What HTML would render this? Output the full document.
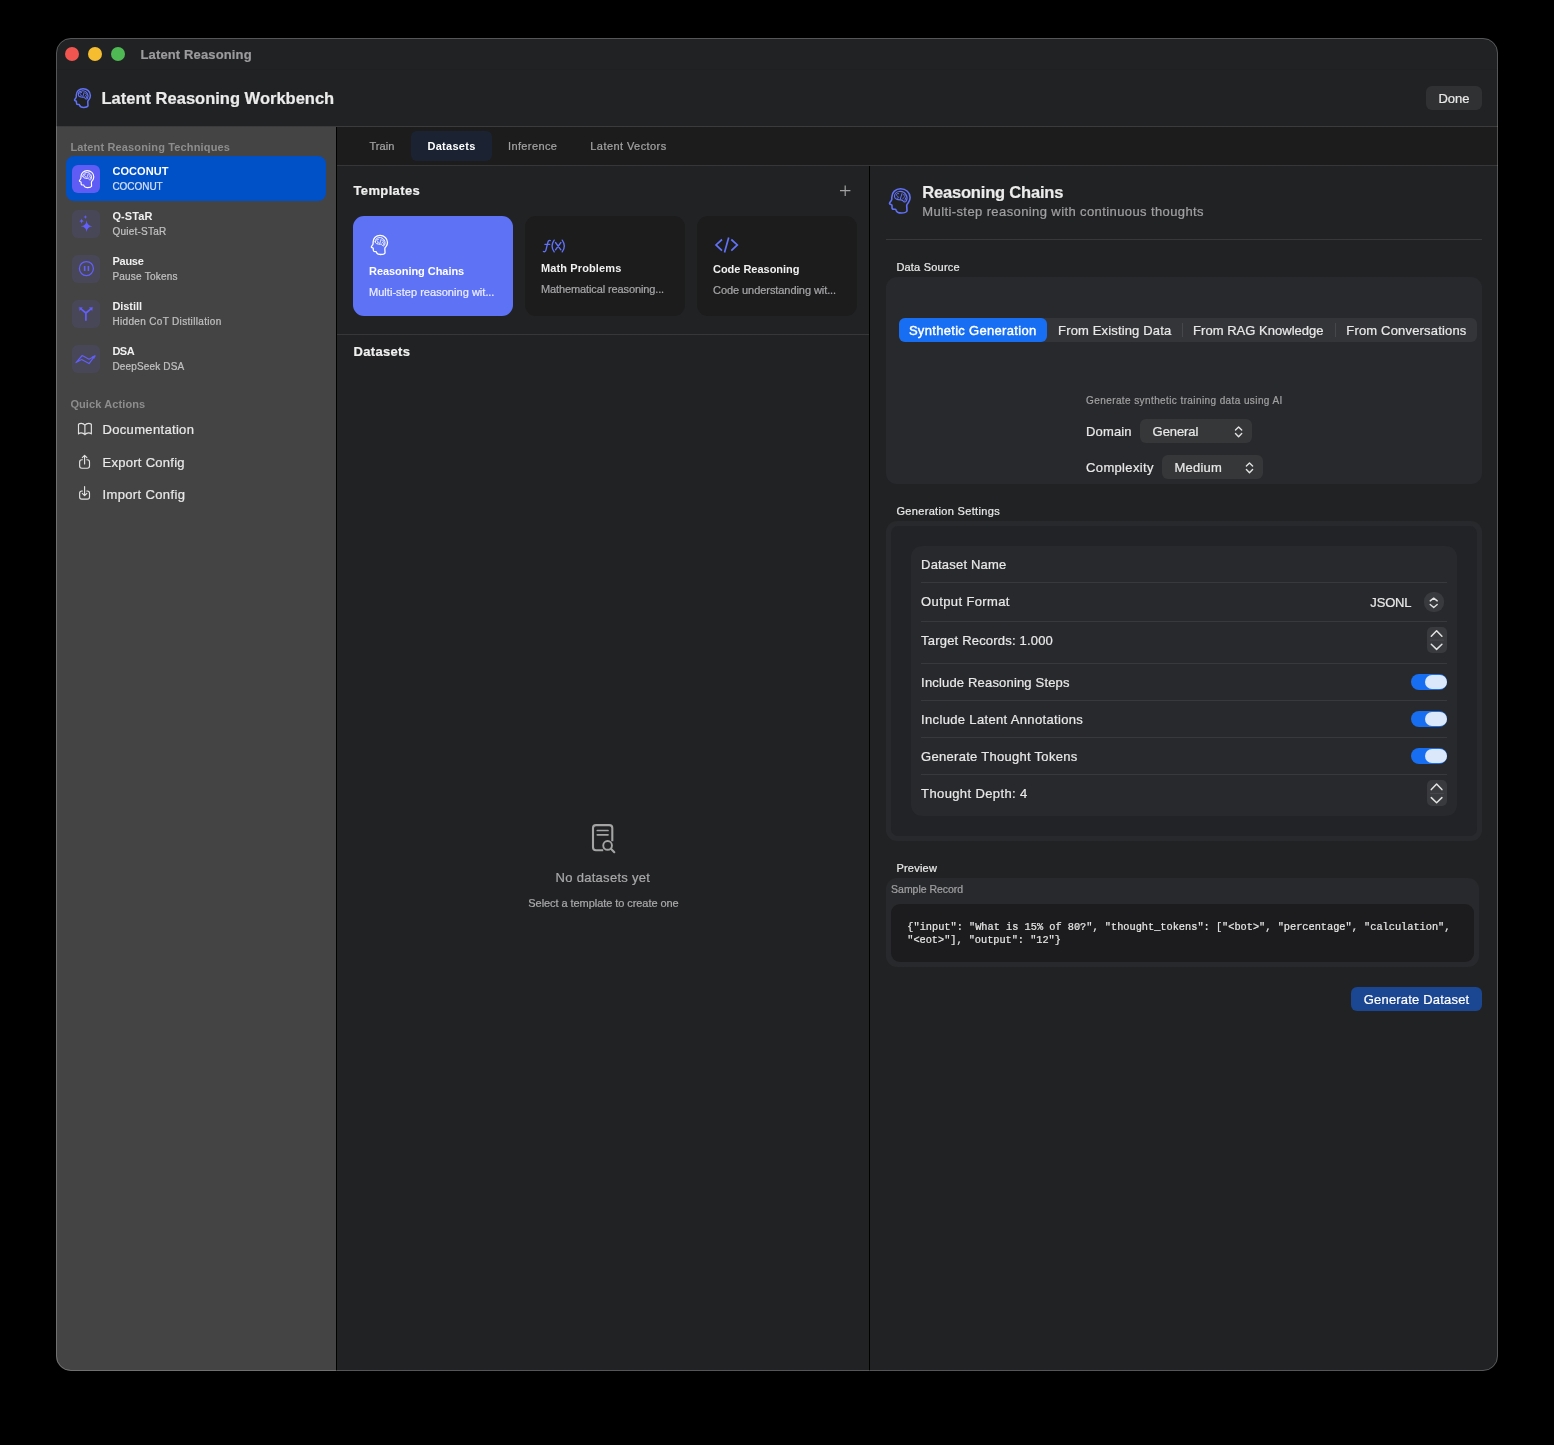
<!DOCTYPE html>
<html><head><meta charset="utf-8">
<style>
*{box-sizing:border-box;margin:0;padding:0}
html,body{width:1554px;height:1445px;background:#000;overflow:hidden}
body{font-family:"Liberation Sans",sans-serif;color:#e6e6e6;position:relative}
.a{position:absolute}
#win{position:absolute;left:56px;top:38px;width:1442px;height:1333px;border-radius:15px;background:#212224;overflow:hidden}
#p{position:absolute;left:-56px;top:-38px;width:1554px;height:1445px;will-change:transform}
#wb{position:absolute;left:56px;top:38px;width:1442px;height:1333px;border-radius:15px;border:1px solid rgba(255,255,255,.24)}
.t{position:absolute;white-space:nowrap;line-height:1;-webkit-text-stroke:0.22px}
svg{position:absolute;overflow:visible}
</style></head><body>
<div id="win"><div id="p">
<div class="a" style="left:65px;top:47px;width:14px;height:14px;background:#f0554f;border-radius:7px;"></div>
<div class="a" style="left:88px;top:47px;width:14px;height:14px;background:#f5bd2f;border-radius:7px;"></div>
<div class="a" style="left:111px;top:47px;width:14px;height:14px;background:#4fb954;border-radius:7px;"></div>
<div class="t" style="left:140.5px;top:48.03px;font-size:13px;color:#9c9c9e;font-weight:bold;-webkit-text-stroke:0.2px;letter-spacing:0.135px;">Latent Reasoning</div>
<div class="t" style="left:101.5px;top:90.12px;font-size:16.5px;color:#ebebeb;font-weight:bold;-webkit-text-stroke:0.2px;letter-spacing:0.005px;">Latent Reasoning Workbench</div>
<div class="a" style="left:1426px;top:86px;width:56px;height:24px;background:#303133;border-radius:6px;"></div>
<div class="t" style="left:1438.4px;top:92.13px;font-size:13px;color:#e8e8e8;letter-spacing:0.007px;">Done</div>
<div class="a" style="left:56px;top:69px;width:1442px;height:1px;background:#1f2022;"></div>
<div class="a" style="left:56px;top:126px;width:1442px;height:1px;background:#3b3b3d;"></div>
<div class="a" style="left:56px;top:127px;width:280px;height:1245px;background:#444444;"></div>
<div class="a" style="left:336px;top:127px;width:1px;height:1245px;background:#000;"></div>
<div class="t" style="left:70.4px;top:141.81px;font-size:11px;color:#8d8d8d;font-weight:bold;-webkit-text-stroke:0;letter-spacing:0.148px;">Latent Reasoning Techniques</div>
<div class="a" style="left:66px;top:156px;width:260px;height:45px;background:#0050c7;border-radius:8px;"></div>
<div class="a" style="left:72px;top:165px;width:28px;height:28px;background:#5f5cf6;border-radius:6px;"></div>
<div class="t" style="left:112.4px;top:165.81px;font-size:11px;color:#ffffff;font-weight:bold;-webkit-text-stroke:0;letter-spacing:0.082px;">COCONUT</div>
<div class="t" style="left:112.4px;top:181.90px;font-size:10px;color:#d6e0f6;letter-spacing:-0.044px;">COCONUT</div>
<div class="a" style="left:72px;top:210px;width:28px;height:28px;background:#484758;border-radius:6px;"></div>
<div class="t" style="left:112.4px;top:210.81px;font-size:11px;color:#f0f0f0;font-weight:bold;-webkit-text-stroke:0;letter-spacing:0.114px;">Q-STaR</div>
<div class="t" style="left:112.4px;top:226.90px;font-size:10px;color:#c0c0c0;letter-spacing:0.246px;">Quiet-STaR</div>
<div class="a" style="left:72px;top:255px;width:28px;height:28px;background:#484758;border-radius:6px;"></div>
<div class="t" style="left:112.4px;top:255.81px;font-size:11px;color:#f0f0f0;font-weight:bold;-webkit-text-stroke:0;letter-spacing:-0.230px;">Pause</div>
<div class="t" style="left:112.4px;top:271.90px;font-size:10px;color:#c0c0c0;letter-spacing:0.224px;">Pause Tokens</div>
<div class="a" style="left:72px;top:300px;width:28px;height:28px;background:#484758;border-radius:6px;"></div>
<div class="t" style="left:112.4px;top:300.81px;font-size:11px;color:#f0f0f0;font-weight:bold;-webkit-text-stroke:0;letter-spacing:-0.059px;">Distill</div>
<div class="t" style="left:112.4px;top:316.90px;font-size:10px;color:#c0c0c0;letter-spacing:0.335px;">Hidden CoT Distillation</div>
<div class="a" style="left:72px;top:345px;width:28px;height:28px;background:#484758;border-radius:6px;"></div>
<div class="t" style="left:112.4px;top:345.81px;font-size:11px;color:#f0f0f0;font-weight:bold;-webkit-text-stroke:0;letter-spacing:-0.517px;">DSA</div>
<div class="t" style="left:112.4px;top:361.90px;font-size:10px;color:#c0c0c0;letter-spacing:0.159px;">DeepSeek DSA</div>
<div class="t" style="left:70.4px;top:398.91px;font-size:11px;color:#8d8d8d;font-weight:bold;-webkit-text-stroke:0;letter-spacing:0.103px;">Quick Actions</div>
<div class="t" style="left:102.5px;top:423.03px;font-size:13px;color:#e8e8e8;letter-spacing:0.329px;">Documentation</div>
<div class="t" style="left:102.5px;top:456.13px;font-size:13px;color:#e8e8e8;letter-spacing:0.278px;">Export Config</div>
<div class="t" style="left:102.5px;top:487.83px;font-size:13px;color:#e8e8e8;letter-spacing:0.363px;">Import Config</div>
<div class="a" style="left:337px;top:127px;width:1161px;height:38px;background:#1c1c1c;"></div>
<div class="a" style="left:337px;top:165px;width:1161px;height:1px;background:#363638;"></div>
<div class="a" style="left:411px;top:131px;width:81px;height:30px;background:#1b2333;border-radius:6px;"></div>
<div class="t" style="left:369.5px;top:140.91px;font-size:11px;color:#a3a3a3;letter-spacing:0.061px;">Train</div>
<div class="t" style="left:427.4px;top:140.91px;font-size:11px;color:#ffffff;font-weight:bold;-webkit-text-stroke:0;letter-spacing:0.292px;">Datasets</div>
<div class="t" style="left:508px;top:140.91px;font-size:11px;color:#a3a3a3;letter-spacing:0.378px;">Inference</div>
<div class="t" style="left:590.3px;top:140.91px;font-size:11px;color:#a3a3a3;letter-spacing:0.429px;">Latent Vectors</div>
<div class="a" style="left:869px;top:166px;width:1px;height:1206px;background:#000;"></div>
<div class="t" style="left:353.5px;top:184.23px;font-size:13px;color:#f0f0f0;font-weight:bold;-webkit-text-stroke:0.2px;letter-spacing:0.357px;">Templates</div>
<div class="a" style="left:353px;top:216px;width:160px;height:100px;background:#5e72f6;border-radius:11px;"></div>
<div class="a" style="left:525px;top:216px;width:160px;height:100px;background:#1c1c1d;border-radius:11px;"></div>
<div class="a" style="left:697px;top:216px;width:160px;height:100px;background:#1c1c1d;border-radius:11px;"></div>
<div class="t" style="left:369px;top:265.81px;font-size:11px;color:#ffffff;font-weight:bold;-webkit-text-stroke:0;letter-spacing:-0.051px;">Reasoning Chains</div>
<div class="t" style="left:369px;top:287.21px;font-size:11px;color:#eceeff;letter-spacing:0.037px;">Multi-step reasoning wit<span style="letter-spacing:-0.2px">...</span></div>
<div class="t" style="left:541px;top:262.71px;font-size:11px;color:#f0f0f0;font-weight:bold;-webkit-text-stroke:0;letter-spacing:0.120px;">Math Problems</div>
<div class="t" style="left:541px;top:284.41px;font-size:11px;color:#a6a6a8;letter-spacing:-0.111px;">Mathematical reasoning<span style="letter-spacing:-0.2px">...</span></div>
<div class="t" style="left:713px;top:263.81px;font-size:11px;color:#f0f0f0;font-weight:bold;-webkit-text-stroke:0;letter-spacing:-0.023px;">Code Reasoning</div>
<div class="t" style="left:713px;top:284.81px;font-size:11px;color:#a6a6a8;letter-spacing:-0.061px;">Code understanding wit<span style="letter-spacing:-0.2px">...</span></div>
<div class="a" style="left:337px;top:334px;width:532px;height:1px;background:#37373a;"></div>
<div class="t" style="left:353.5px;top:345.13px;font-size:13px;color:#f0f0f0;font-weight:bold;-webkit-text-stroke:0.2px;letter-spacing:0.328px;">Datasets</div>
<div class="t" style="left:555.6px;top:871.33px;font-size:13px;color:#a9a9aa;letter-spacing:0.284px;">No datasets yet</div>
<div class="t" style="left:528.3px;top:898.01px;font-size:11px;color:#a9a9aa;letter-spacing:-0.062px;">Select a template to create one</div>
<div class="t" style="left:922.3px;top:184.31px;font-size:16.5px;color:#ebebeb;font-weight:bold;-webkit-text-stroke:0.2px;letter-spacing:-0.190px;">Reasoning Chains</div>
<div class="t" style="left:922.3px;top:205.13px;font-size:13px;color:#a0a0a2;letter-spacing:0.399px;">Multi-step reasoning with continuous thoughts</div>
<div class="a" style="left:886px;top:239px;width:596px;height:1px;background:#38383b;"></div>
<div class="t" style="left:896.4px;top:261.61px;font-size:11px;color:#e8e8e8;letter-spacing:0.204px;">Data Source</div>
<div class="a" style="left:886px;top:277px;width:596px;height:207px;background:#28292c;border-radius:11px;"></div>
<div class="a" style="left:899px;top:318px;width:578px;height:24px;background:#343538;border-radius:6px;"></div>
<div class="a" style="left:899px;top:318px;width:148px;height:24px;background:#186ef3;border-radius:6px;"></div>
<div class="t" style="left:908.9px;top:323.93px;font-size:13px;color:#ffffff;letter-spacing:0.310px;-webkit-text-stroke:0.4px;">Synthetic Generation</div>
<div class="t" style="left:1058.1px;top:323.93px;font-size:13px;color:#e8e8e8;letter-spacing:0.150px;">From Existing Data</div>
<div class="a" style="left:1182px;top:323px;width:1px;height:14px;background:#46474a;"></div>
<div class="t" style="left:1193.1px;top:323.93px;font-size:13px;color:#e8e8e8;letter-spacing:0.026px;">From RAG Knowledge</div>
<div class="a" style="left:1335px;top:323px;width:1px;height:14px;background:#46474a;"></div>
<div class="t" style="left:1346.3px;top:323.93px;font-size:13px;color:#e8e8e8;letter-spacing:0.174px;">From Conversations</div>
<div class="t" style="left:1086.1px;top:395.50px;font-size:10px;color:#a0a0a2;letter-spacing:0.402px;">Generate synthetic training data using AI</div>
<div class="t" style="left:1086.1px;top:424.83px;font-size:13px;color:#e8e8e8;letter-spacing:0.121px;">Domain</div>
<div class="a" style="left:1140px;top:419px;width:112px;height:24px;background:#363739;border-radius:6px;"></div>
<div class="t" style="left:1152.6px;top:424.83px;font-size:13px;color:#e8e8e8;letter-spacing:-0.075px;">General</div>
<div class="t" style="left:1086.1px;top:460.93px;font-size:13px;color:#e8e8e8;letter-spacing:0.334px;">Complexity</div>
<div class="a" style="left:1162px;top:455px;width:101px;height:24px;background:#363739;border-radius:6px;"></div>
<div class="t" style="left:1174.5px;top:460.93px;font-size:13px;color:#e8e8e8;letter-spacing:0.230px;">Medium</div>
<div class="t" style="left:896.4px;top:505.71px;font-size:11px;color:#e8e8e8;letter-spacing:0.337px;">Generation Settings</div>
<div class="a" style="left:886px;top:521px;width:596px;height:320px;background:#28292c;border-radius:11px;"></div>
<div class="a" style="left:891px;top:526px;width:586px;height:310px;background:#222326;border-radius:7px;"></div>
<div class="a" style="left:911px;top:546px;width:546px;height:270px;background:#28292c;border-radius:11px;"></div>
<div class="t" style="left:921.1px;top:558.23px;font-size:13px;color:#e8e8e8;letter-spacing:0.182px;">Dataset Name</div>
<div class="t" style="left:921.1px;top:595.13px;font-size:13px;color:#e8e8e8;letter-spacing:0.382px;">Output Format</div>
<div class="t" style="left:921.1px;top:634.03px;font-size:13px;color:#e8e8e8;letter-spacing:0.190px;">Target Records: 1.000</div>
<div class="t" style="left:921.1px;top:675.83px;font-size:13px;color:#e8e8e8;letter-spacing:0.175px;">Include Reasoning Steps</div>
<div class="t" style="left:921.1px;top:713.13px;font-size:13px;color:#e8e8e8;letter-spacing:0.339px;">Include Latent Annotations</div>
<div class="t" style="left:921.1px;top:749.93px;font-size:13px;color:#e8e8e8;letter-spacing:0.284px;">Generate Thought Tokens</div>
<div class="t" style="left:921.1px;top:786.83px;font-size:13px;color:#e8e8e8;letter-spacing:0.382px;">Thought Depth: 4</div>
<div class="a" style="left:921px;top:582px;width:526px;height:1px;background:#38393c;"></div>
<div class="a" style="left:921px;top:621px;width:526px;height:1px;background:#38393c;"></div>
<div class="a" style="left:921px;top:663px;width:526px;height:1px;background:#38393c;"></div>
<div class="a" style="left:921px;top:700px;width:526px;height:1px;background:#38393c;"></div>
<div class="a" style="left:921px;top:737px;width:526px;height:1px;background:#38393c;"></div>
<div class="a" style="left:921px;top:774px;width:526px;height:1px;background:#38393c;"></div>
<div class="t" style="left:1370.3px;top:595.93px;font-size:13px;color:#e8e8e8;letter-spacing:-0.152px;">JSONL</div>
<div class="a" style="left:1424px;top:592px;width:20px;height:20px;background:#393a3d;border-radius:9px;"></div>
<div class="a" style="left:1427.2px;top:627.4px;width:19.6px;height:25.6px;background:#393a3d;border-radius:5px;"></div>
<div class="a" style="left:1427.2px;top:780.2px;width:19.6px;height:25.6px;background:#393a3d;border-radius:5px;"></div>
<div class="a" style="left:1411px;top:674px;width:36px;height:16px;background:#186ef0;border-radius:8px;"></div>
<div class="a" style="left:1424.8px;top:674.8px;width:21.8px;height:14.4px;background:#dbe8fc;border-radius:7.2px;"></div>
<div class="a" style="left:1411px;top:711.3px;width:36px;height:16px;background:#186ef0;border-radius:8px;"></div>
<div class="a" style="left:1424.8px;top:712.1px;width:21.8px;height:14.4px;background:#dbe8fc;border-radius:7.2px;"></div>
<div class="a" style="left:1411px;top:748.1px;width:36px;height:16px;background:#186ef0;border-radius:8px;"></div>
<div class="a" style="left:1424.8px;top:748.9px;width:21.8px;height:14.4px;background:#dbe8fc;border-radius:7.2px;"></div>
<div class="t" style="left:896.4px;top:862.61px;font-size:11px;color:#e8e8e8;letter-spacing:0.229px;">Preview</div>
<div class="a" style="left:886px;top:878px;width:593px;height:89px;background:#28292c;border-radius:11px;"></div>
<div class="t" style="left:891.1px;top:884.36px;font-size:10.5px;color:#a0a0a2;letter-spacing:-0.023px;">Sample Record</div>
<div class="a" style="left:891px;top:904px;width:583px;height:57.5px;background:#1c1c1e;border-radius:9px;"></div>
<div class="t" style="left:907.3px;top:922.45px;font-size:10.3px;color:#e6e6e6;font-family:'Liberation Mono',monospace;letter-spacing:-0.007px;">{&quot;input&quot;: &quot;What is 15% of 80?&quot;, &quot;thought_tokens&quot;: [&quot;&lt;bot&gt;&quot;, &quot;percentage&quot;, &quot;calculation&quot;,</div>
<div class="t" style="left:907.3px;top:935.45px;font-size:10.3px;color:#e6e6e6;font-family:'Liberation Mono',monospace;letter-spacing:-0.037px;">&quot;&lt;eot&gt;&quot;], &quot;output&quot;: &quot;12&quot;}</div>
<div class="a" style="left:1351px;top:987px;width:131px;height:24px;background:#1b4691;border-radius:6px;"></div>
<div class="t" style="left:1363.8px;top:992.93px;font-size:13px;color:#ffffff;letter-spacing:0.185px;">Generate Dataset</div>
<svg width="1554" height="1445" viewBox="0 0 1554 1445" style="left:0;top:0" fill="none" stroke-linecap="round" stroke-linejoin="round">
<g transform="translate(880,180) scale(1)" stroke="#6172f6"><path d="M27,31 L26.7,25.6 C26.7,24.3 27.6,23.6 28.4,22.6 C29.6,21 30.1,19.3 30.1,17.6 C30.1,12.4 25.9,8.75 20.6,8.75 C15.6,8.75 11.8,12.3 11.8,17.2 L11.8,19.1 C11.8,19.8 11.5,20.2 11.1,20.8 L9.7,22.8 C9.3,23.5 9.6,24.1 10.3,24.3 L11.5,24.7 C11.9,24.8 12,25.1 12,25.5 L12,27.4 C12,28.6 12.8,29.3 13.9,29.3 L15.3,29.3 C15.8,29.3 16,29.6 16.1,30.2 C16.7,32.3 18.9,33 21.4,33 C24,33 26.2,32.6 27,31 Z" stroke-width="1.600"/><path d="M14.5,16.8 C14.3,14.2 16.2,11.9 19,11.5 C22,11 24.6,12.2 26,14.6 C27.2,16.6 27.3,19.2 26.3,21 C25.7,22.1 24.6,22.4 23.7,21.5 C23,20.6 22.2,20 21,19.9 C19.5,19.8 18,19.9 16.6,19.3 C15.3,18.8 14.6,18 14.5,16.8 Z" stroke-width="1.152"/><path d="M18.7,13.6 C17.2,13.2 16.1,14.2 16.5,15.3 C16.9,16.3 18.4,16.2 18.6,17.3 C18.7,18 18,18.4 17.2,18.2 M22,13.5 L20.2,19.3 M23.2,14.8 C24.3,14.3 25.3,15 25,16.1 C24.7,17 23.4,17.4 23,18.5 M25.8,17.7 L24.9,20.3" stroke-width="0.992" stroke-opacity="1"/></g>
<g transform="translate(67.2,82) scale(0.77)" stroke="#6172f6"><path d="M27,31 L26.7,25.6 C26.7,24.3 27.6,23.6 28.4,22.6 C29.6,21 30.1,19.3 30.1,17.6 C30.1,12.4 25.9,8.75 20.6,8.75 C15.6,8.75 11.8,12.3 11.8,17.2 L11.8,19.1 C11.8,19.8 11.5,20.2 11.1,20.8 L9.7,22.8 C9.3,23.5 9.6,24.1 10.3,24.3 L11.5,24.7 C11.9,24.8 12,25.1 12,25.5 L12,27.4 C12,28.6 12.8,29.3 13.9,29.3 L15.3,29.3 C15.8,29.3 16,29.6 16.1,30.2 C16.7,32.3 18.9,33 21.4,33 C24,33 26.2,32.6 27,31 Z" stroke-width="1.948"/><path d="M14.5,16.8 C14.3,14.2 16.2,11.9 19,11.5 C22,11 24.6,12.2 26,14.6 C27.2,16.6 27.3,19.2 26.3,21 C25.7,22.1 24.6,22.4 23.7,21.5 C23,20.6 22.2,20 21,19.9 C19.5,19.8 18,19.9 16.6,19.3 C15.3,18.8 14.6,18 14.5,16.8 Z" stroke-width="1.403"/><path d="M18.7,13.6 C17.2,13.2 16.1,14.2 16.5,15.3 C16.9,16.3 18.4,16.2 18.6,17.3 C18.7,18 18,18.4 17.2,18.2 M22,13.5 L20.2,19.3 M23.2,14.8 C24.3,14.3 25.3,15 25,16.1 C24.7,17 23.4,17.4 23,18.5 M25.8,17.7 L24.9,20.3" stroke-width="1.208" stroke-opacity="1"/></g>
<g transform="translate(72.7,164.5) scale(0.7)" stroke="#ffffff"><path d="M27,31 L26.7,25.6 C26.7,24.3 27.6,23.6 28.4,22.6 C29.6,21 30.1,19.3 30.1,17.6 C30.1,12.4 25.9,8.75 20.6,8.75 C15.6,8.75 11.8,12.3 11.8,17.2 L11.8,19.1 C11.8,19.8 11.5,20.2 11.1,20.8 L9.7,22.8 C9.3,23.5 9.6,24.1 10.3,24.3 L11.5,24.7 C11.9,24.8 12,25.1 12,25.5 L12,27.4 C12,28.6 12.8,29.3 13.9,29.3 L15.3,29.3 C15.8,29.3 16,29.6 16.1,30.2 C16.7,32.3 18.9,33 21.4,33 C24,33 26.2,32.6 27,31 Z" stroke-width="1.643"/><path d="M14.5,16.8 C14.3,14.2 16.2,11.9 19,11.5 C22,11 24.6,12.2 26,14.6 C27.2,16.6 27.3,19.2 26.3,21 C25.7,22.1 24.6,22.4 23.7,21.5 C23,20.6 22.2,20 21,19.9 C19.5,19.8 18,19.9 16.6,19.3 C15.3,18.8 14.6,18 14.5,16.8 Z" stroke-width="1.183"/><path d="M18.7,13.6 C17.2,13.2 16.1,14.2 16.5,15.3 C16.9,16.3 18.4,16.2 18.6,17.3 C18.7,18 18,18.4 17.2,18.2 M22,13.5 L20.2,19.3 M23.2,14.8 C24.3,14.3 25.3,15 25,16.1 C24.7,17 23.4,17.4 23,18.5 M25.8,17.7 L24.9,20.3" stroke-width="1.019" stroke-opacity="1"/></g>
<g transform="translate(363.85,228.6) scale(0.785)" stroke="#ffffff"><path d="M27,31 L26.7,25.6 C26.7,24.3 27.6,23.6 28.4,22.6 C29.6,21 30.1,19.3 30.1,17.6 C30.1,12.4 25.9,8.75 20.6,8.75 C15.6,8.75 11.8,12.3 11.8,17.2 L11.8,19.1 C11.8,19.8 11.5,20.2 11.1,20.8 L9.7,22.8 C9.3,23.5 9.6,24.1 10.3,24.3 L11.5,24.7 C11.9,24.8 12,25.1 12,25.5 L12,27.4 C12,28.6 12.8,29.3 13.9,29.3 L15.3,29.3 C15.8,29.3 16,29.6 16.1,30.2 C16.7,32.3 18.9,33 21.4,33 C24,33 26.2,32.6 27,31 Z" stroke-width="1.656"/><path d="M14.5,16.8 C14.3,14.2 16.2,11.9 19,11.5 C22,11 24.6,12.2 26,14.6 C27.2,16.6 27.3,19.2 26.3,21 C25.7,22.1 24.6,22.4 23.7,21.5 C23,20.6 22.2,20 21,19.9 C19.5,19.8 18,19.9 16.6,19.3 C15.3,18.8 14.6,18 14.5,16.8 Z" stroke-width="1.192"/><path d="M18.7,13.6 C17.2,13.2 16.1,14.2 16.5,15.3 C16.9,16.3 18.4,16.2 18.6,17.3 C18.7,18 18,18.4 17.2,18.2 M22,13.5 L20.2,19.3 M23.2,14.8 C24.3,14.3 25.3,15 25,16.1 C24.7,17 23.4,17.4 23,18.5 M25.8,17.7 L24.9,20.3" stroke-width="1.027" stroke-opacity="1"/></g>
<path d="M86.6,220.3 Q86.954,225.846 92.5,226.2 Q86.954,226.554 86.6,232.1 Q86.246,226.554 80.7,226.2 Q86.246,225.846 86.6,220.3 Z M81.6,218.2 Q81.774,220.926 84.5,221.1 Q81.774,221.274 81.6,224 Q81.426,221.274 78.7,221.1 Q81.426,220.926 81.6,218.2 Z M85.4,215.1 Q85.52,216.98 87.4,217.1 Q85.52,217.22 85.4,219.1 Q85.28,217.22 83.4,217.1 Q85.28,216.98 85.4,215.1 Z" fill="#625ffa"/>
<circle cx="86.4" cy="268.5" r="7" stroke="#625ffa" stroke-width="1.25"/>
<path d="M84.65,265.9 V271.1 M88.4,265.9 V271.1" stroke="#625ffa" stroke-width="1.6" stroke-linecap="butt"/>
<path d="M85.9,320.7 V313 L80.6,308.6 M85.9,313 L91.3,308.6" stroke="#625ffa" stroke-width="1.7" stroke-linecap="butt"/>
<path d="M79.5,307.4 L82.4,307.8 L79.9,310.3 Z M92.3,307.4 L89.4,307.8 L91.9,310.3 Z" fill="#625ffa" stroke="#625ffa" stroke-width="0.5"/>
<path d="M76,362.6 L82.2,355.5 L89.05,359.2 L94.9,355.9 L89.05,363.6 L81.6,359.5 Z" stroke="#625ffa" stroke-width="1.15"/>
<path d="M94.9,355.9 L92.4,356.6 L93.8,358.2 Z" fill="#625ffa" stroke="#625ffa" stroke-width="0.6"/>
<path d="M84.9,425.2 C84,424 82.6,423.3 81.2,423.3 C80.2,423.3 79.2,423.7 78.5,424.3 V433.9 C79.2,433.3 80.2,432.9 81.2,432.9 C82.6,432.9 84,433.6 84.9,434.7 C85.8,433.6 87.2,432.9 88.6,432.9 C89.6,432.9 90.6,433.3 91.35,433.9 V424.3 C90.6,423.7 89.6,423.3 88.6,423.3 C87.2,423.3 85.8,424 84.9,425.2 Z M84.9,425.2 V434.7" stroke="#e2e2e2" stroke-width="1.15"/>
<path d="M82.4,459.75 H81.85 A2.2,2.2 0 0 0 79.65,461.95 V466.05 A2.2,2.2 0 0 0 81.85,468.25 H87.3 A2.2,2.2 0 0 0 89.5,466.05 V461.95 A2.2,2.2 0 0 0 87.3,459.75 H86.8 M84.6,463.9 V455.4 M82.3,457.6 L84.6,455.3 L86.9,457.6" stroke="#e2e2e2" stroke-width="1.15"/>
<path d="M82.4,490.95 H81.85 A2.2,2.2 0 0 0 79.65,493.15 V496.95 A2.2,2.2 0 0 0 81.85,499.15 H87.3 A2.2,2.2 0 0 0 89.5,496.95 V493.15 A2.2,2.2 0 0 0 87.3,490.95 H86.8 M84.6,486.6 V495.4 M82.3,493.3 L84.6,495.6 L86.9,493.3" stroke="#e2e2e2" stroke-width="1.15"/>
<path d="M840,190.7 H850.4 M845.2,185.5 V195.9" stroke="#a2a2a2" stroke-width="1.2" stroke-linecap="butt"/>
<path d="M550.3,240.6 C549.3,240.2 548.5,240.5 548.1,241.6 C547.5,243.4 546.5,248 546,249.9 C545.6,251.5 544.6,252.1 543.4,251.5 M544.9,244.3 H549.8 M554.2,240.1 C551.6,243.7 551.6,248.3 554.2,251.9 M555.5,242.5 L560.9,249.8 M560.9,242.5 L555.5,249.8 M562.2,240.1 C564.8,243.7 564.8,248.3 562.2,251.9" stroke="#6172f6" stroke-width="1.35"/>
<path d="M722,239.5 L716,244.9 L722,250.6 M728.7,237.5 L724.5,252.5 M731.3,239.5 L737.3,244.9 L731.3,250.6" stroke="#6172f6" stroke-width="1.7" stroke-linecap="butt" stroke-linejoin="miter"/>
<path d="M603.2,850.2 H596 C594,850.2 593,849.2 593,847.2 V828.1 C593,826.1 594,825.1 596,825.1 H609.3 C611.3,825.1 612.3,826.1 612.3,828.1 V841.3" stroke="#a4a4a4" stroke-width="2.1" stroke-linecap="butt"/>
<path d="M597.3,830.5 H608 M597.3,834.8 H608" stroke="#a4a4a4" stroke-width="1.7"/>
<circle cx="607.6" cy="845.4" r="4.35" stroke="#a4a4a4" stroke-width="1.9"/>
<path d="M610.9,848.8 L614.3,852.2" stroke="#a4a4a4" stroke-width="2.1"/>
<path d="M1235.5,430 L1238.6,426.9 L1241.7,430 M1235.5,433.6 L1238.6,436.8 L1241.7,433.6" stroke="#e2e2e2" stroke-width="1.4"/>
<path d="M1246.4,466 L1249.5,463 L1252.6,466 M1246.4,469.5 L1249.5,472.8 L1252.6,469.5" stroke="#e2e2e2" stroke-width="1.4"/>
<path d="M1430.2,600.9 L1433.7,598.1 L1437.2,600.9 M1430.2,604.5 L1433.7,607.5 L1437.2,604.5" stroke="#e2e2e2" stroke-width="1.4"/>
<path d="M1430,640.1 H1444" stroke="#4c4d50" stroke-width="0.8" stroke-linecap="butt"/>
<path d="M1431.3,636.3 L1436.6,630.7 L1441.9,636.3 M1431.3,644.3 L1436.6,649.4 L1441.9,644.3" stroke="#e2e2e2" stroke-width="1.5"/>
<path d="M1430,793.4 H1444" stroke="#4c4d50" stroke-width="0.8" stroke-linecap="butt"/>
<path d="M1431.3,789.6 L1436.6,784 L1441.9,789.6 M1431.3,797.6 L1436.6,802.7 L1441.9,797.6" stroke="#e2e2e2" stroke-width="1.5"/>
</svg>
</div></div>
<div id="wb"></div>
</body></html>
